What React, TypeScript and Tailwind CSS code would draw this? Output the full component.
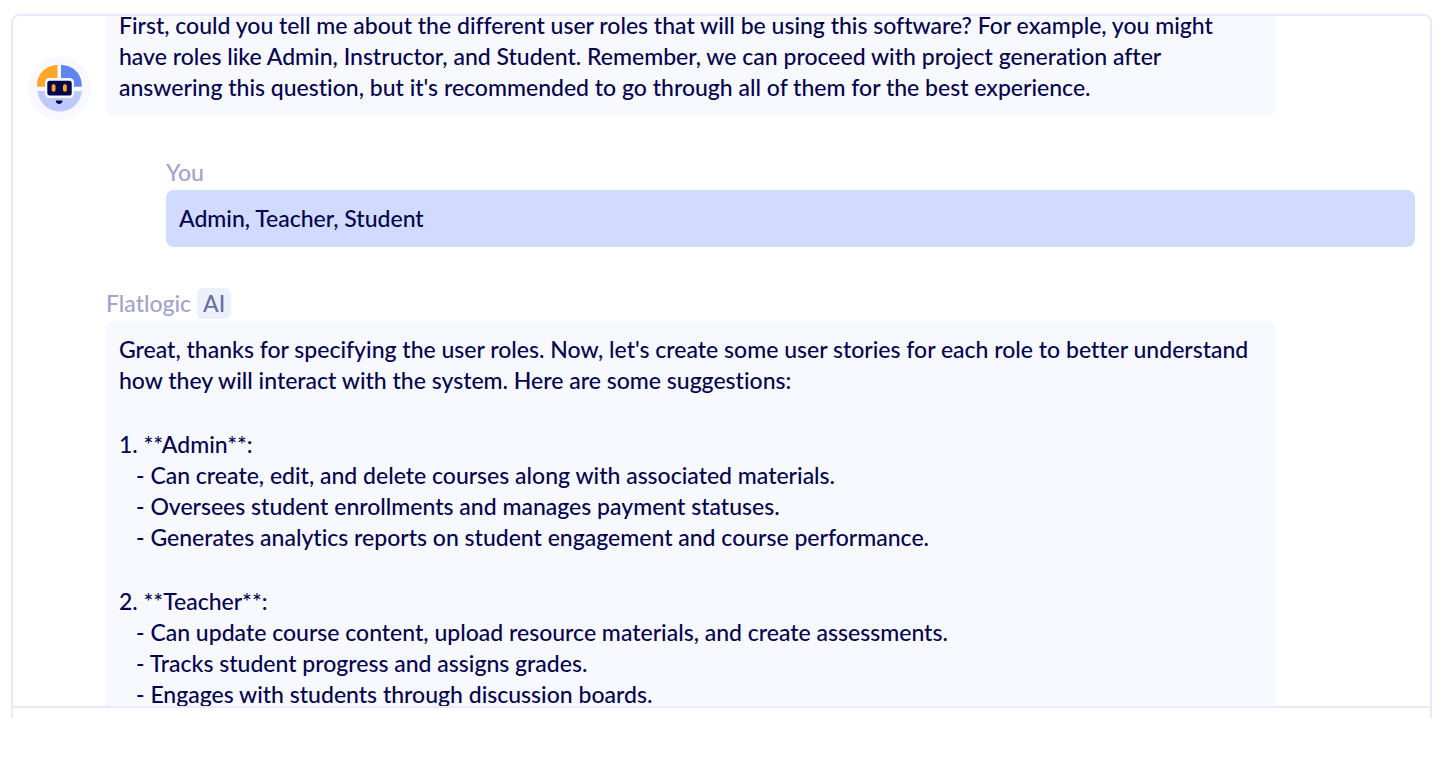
type Story = {
  role: string;
  items: string[];
};

const STORIES: Story[] = [
  {
    role: "1. **Admin**:",
    items: [
      "Can create, edit, and delete courses along with associated materials.",
      "Oversees student enrollments and manages payment statuses.",
      "Generates analytics reports on student engagement and course performance.",
    ],
  },
  {
    role: "2. **Teacher**:",
    items: [
      "Can update course content, upload resource materials, and create assessments.",
      "Tracks student progress and assigns grades.",
      "Engages with students through discussion boards.",
    ],
  },
];

function BotAvatar() {
  return (
    <div className="-mb-1 flex size-[63px] shrink-0 items-center justify-center rounded-full bg-[#f8f9ff]">
      <svg viewBox="0 0 47 49" className="h-[49px] w-[47px]" aria-hidden="true">
        {/* head */}
        <path d="M21.500 1v21.700H1V21C1 10 10 1 21.500 1Z" fill="#ffa72b" />
        <path d="M25 1v21.700h20.700V21C45.700 10 37 1 25 1Z" fill="#5f85f0" />
        <path d="M1.500 27H46c-1 11.500-10.500 20.500-22.200 20.500S2.500 38.500 1.500 27Z" fill="#bfc9ff" />
        {/* visor */}
        <rect x="9" y="14" width="29" height="20" rx="4.500" fill="#f8f9ff" />
        <rect x="11.300" y="16.800" width="24.400" height="14.600" rx="2.500" fill="#04044d" />
        <rect x="15.700" y="20.300" width="3.800" height="7.400" rx="1.800" fill="#ffa72b" />
        <rect x="27" y="20.300" width="3.800" height="7.400" rx="1.800" fill="#ffa72b" />
        {/* mouth */}
        <path d="M19.700 36.400h6.800c0 2-1.600 3.500-3.400 3.500s-3.400-1.500-3.400-3.500Z" fill="#04044d" />
      </svg>
    </div>
  );
}

function BotBubble({ children }: { children: React.ReactNode }) {
  return <div className="rounded-lg bg-[#f8f9ff] p-[13px]">{children}</div>;
}

export default function App() {
  return (
    <main className="flex h-screen flex-col bg-white px-[11px] pt-3.5 pb-[62px] font-['Lato','Open_Sans',sans-serif] text-[23px] leading-[31px] font-medium text-[#04044d] [font-variant-ligatures:none]">
      <section className="mr-[9px] flex min-h-0 flex-1 flex-col rounded-t-lg border-2 border-b-0 border-[#e6eaff]">
        <div className="flex min-h-0 flex-1 flex-col gap-[41px] overflow-hidden px-[15px]">
          {/* scrolled past the top of the first answer */}
          <article className="-mt-[19px] mr-[139px] flex items-end gap-[15px]">
            <BotAvatar />
            <div className="min-w-0 flex-1">
              <BotBubble>
                <p>
                  First, could you tell me about the different user roles that will be using this software? For example, you might
                  have roles like Admin, Instructor, and Student. Remember, we can proceed with project generation after
                  answering this question, but it's recommended to go through all of them for the best experience.
                </p>
              </BotBubble>
            </div>
          </article>

          <article className="ml-[138px]">
            <h2 className="mb-0.5 text-[#a3a3cc]">You</h2>
            <p className="rounded-lg bg-[#d1dbff] p-[13px]">Admin, Teacher, Student</p>
          </article>

          <article className="mr-[139px] ml-[78px]">
            <h2 className="mb-0.5 flex items-center gap-1.5 text-[#a3a3cc]">
              Flatlogic
              <span className="rounded-md bg-[#edf1ff] px-1.5 text-[#6f6f9e]">AI</span>
            </h2>
            <BotBubble>
              <div className="flex flex-col gap-[33px]">
                <p>
                  Great, thanks for specifying the user roles. Now, let's create some user stories for each role to better understand
                  how they will interact with the system. Here are some suggestions:
                </p>
                {STORIES.map((story) => (
                  <div key={story.role}>
                    <p>{story.role}</p>
                    <ul className="pl-[17px]">
                      {story.items.map((item) => (
                        <li key={item}>- {item}</li>
                      ))}
                    </ul>
                  </div>
                ))}
              </div>
            </BotBubble>
          </article>
        </div>
        <div className="h-3 shrink-0 border-t-2 border-[#e6eaff]" />
      </section>
    </main>
  );
}
